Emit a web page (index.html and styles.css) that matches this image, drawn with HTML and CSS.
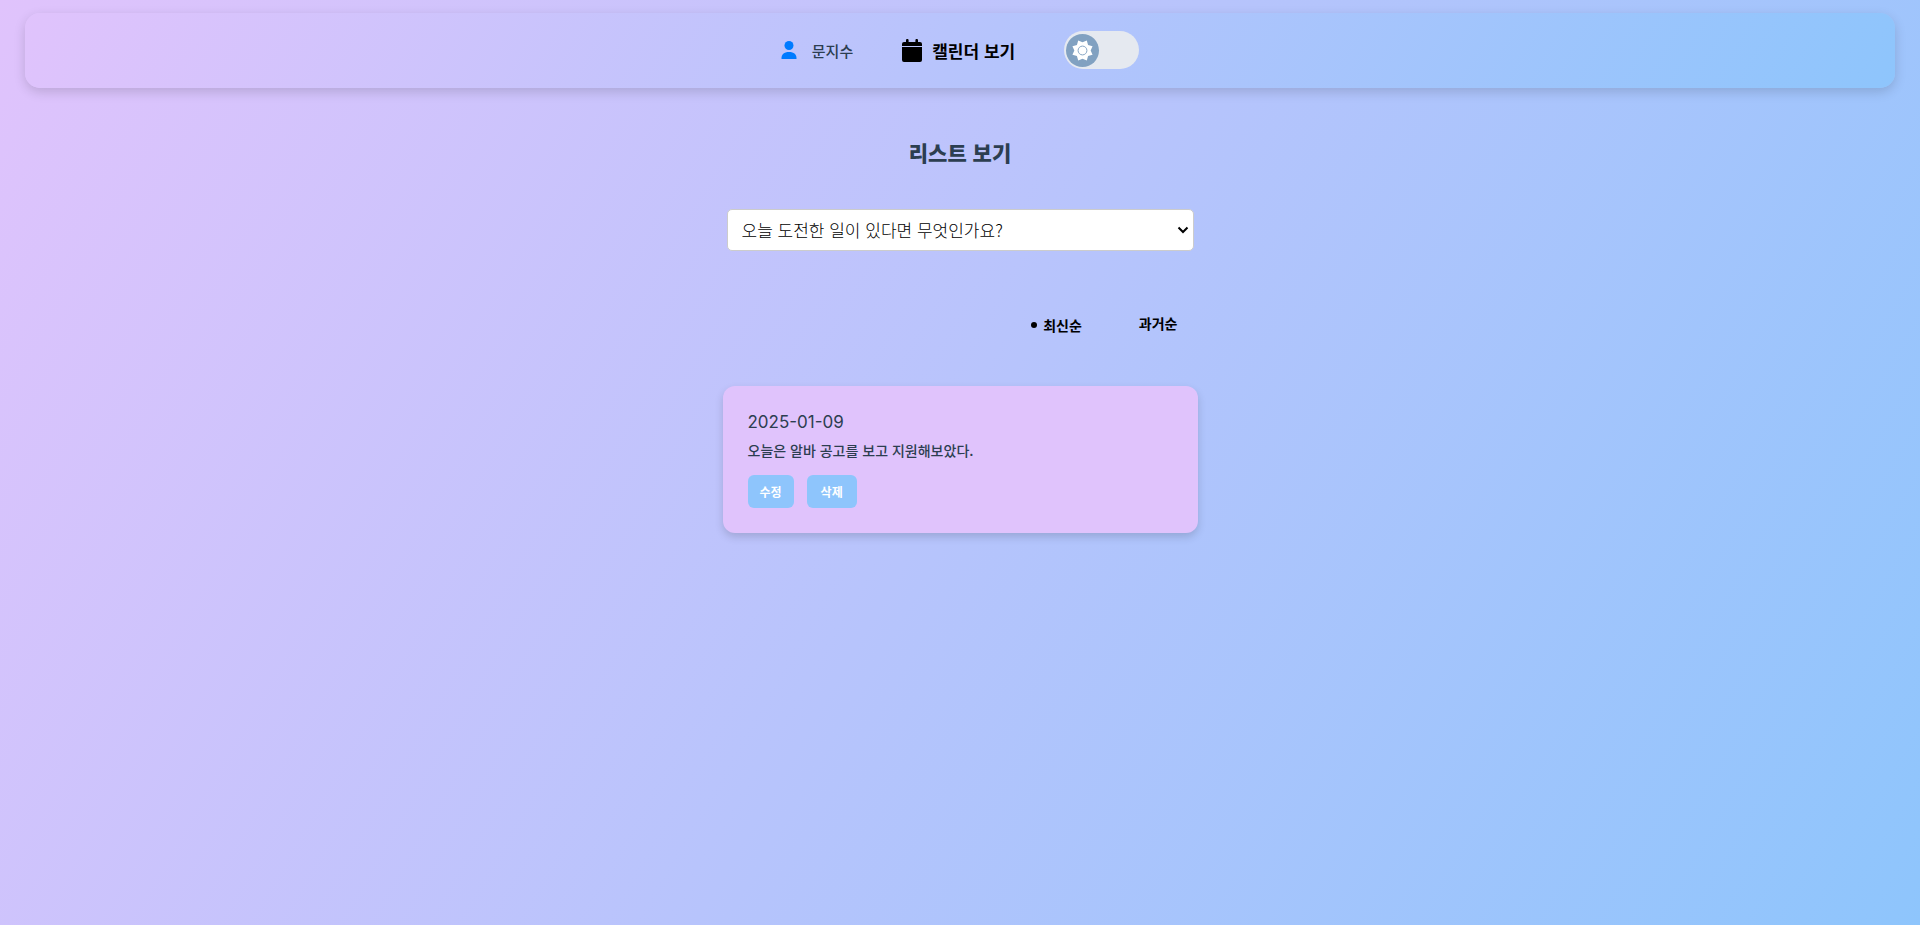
FILE: index.html
```html
<!DOCTYPE html>
<html lang="ko">
<head>
<meta charset="utf-8">
<meta name="viewport" content="width=device-width, initial-scale=1">
<title>리스트 보기</title>
<link rel="stylesheet" href="styles.css">
</head>
<body>
<header class="navbar">
  <a class="user" href="#">
    <svg class="user-icon" viewBox="0 0 16 18" aria-hidden="true"><circle cx="8" cy="4.5" r="4.5"/><path d="M0.5 18C0.2 13.500 3 11 8 11s7.800 2.500 7.500 7z"/></svg>
    <span>문지수</span>
  </a>
  <a class="calendar" href="#">
    <svg class="calendar-icon" viewBox="0 0 20 23" aria-hidden="true"><path d="M4 1.200a1.200 1.200 0 0 1 2.600 0V3h6.800V1.200a1.200 1.200 0 0 1 2.600 0V3h2a2 2 0 0 1 2 2v2H0V5a2 2 0 0 1 2-2h2zM0 8h20v13a2 2 0 0 1-2 2H2a2 2 0 0 1-2-2z"/></svg>
    <span>캘린더 보기</span>
  </a>
  <label class="switch">
    <input class="switch-input" type="checkbox" aria-label="다크 모드">
    <span class="switch-thumb">
      <svg class="sun-icon" viewBox="-12 -12 24 24" aria-hidden="true"><path d="M-4.500 -10.500 0 -8.500 4.500 -10.500 5.800 -5.800 10.500 -4.500 8.500 0 10.500 4.500 5.800 5.800 4.500 10.500 0 8.500-4.500 10.500-5.800 5.800-10.500 4.500-8.500 0-10.500-4.500-5.800-5.800z"/><circle class="sun-ring" r="4.600"/></svg>
    </span>
  </label>
</header>
<main class="content">
  <h1 class="title">리스트 보기</h1>
  <div class="question">
    <select class="question-select" aria-label="질문 선택">
      <option>오늘 도전한 일이 있다면 무엇인가요?</option>
    </select>
    <svg class="question-arrow" viewBox="0 0 12 8" aria-hidden="true"><path d="M1.500 1.500 6 6l4.500-4.500"/></svg>
  </div>
  <div class="sort">
    <button class="sort-button sort-active" type="button"><span class="dot"></span>최신순</button>
    <button class="sort-button" type="button">과거순</button>
  </div>
  <article class="card">
    <time class="card-date" datetime="2025-01-09">2025-01-09</time>
    <p class="card-text">오늘은 알바 공고를 보고 지원해보았다.</p>
    <div class="card-actions">
      <button class="action" type="button">수정</button>
      <button class="action action-delete" type="button">삭제</button>
    </div>
  </article>
</main>
</body>
</html>
```
FILE: styles.css
```css
* {
  box-sizing: border-box;
}

body {
  margin: 0;
  min-height: 100vh;
  padding: 13px 25px;
  background: linear-gradient(120deg, #e0c3fc 0%, #8ec5fc 100%);
  color: #2c3e50;
  font-family: "Noto Sans CJK KR", sans-serif;
}

button,
select {
  font-family: inherit;
}

.navbar {
  display: flex;
  justify-content: center;
  align-items: center;
  gap: 49px;
  padding: 18px 18px 19px;
  border-radius: 15px;
  background: linear-gradient(120deg, #e0c3fc 0%, #8ec5fc 100%);
  box-shadow: 0 4px 12px rgba(0, 0, 0, 0.15);
}

.user,
.calendar {
  display: flex;
  align-items: center;
  text-decoration: none;
}

.user {
  gap: 15px;
  color: #2c3e50;
  font-size: 15px;
  font-weight: 500;
}

.user-icon {
  width: 16px;
  height: 18px;
  fill: #007bff;
}

.calendar {
  gap: 10px;
  color: #000;
  font-size: 17px;
  font-weight: 700;
}

.calendar-icon {
  width: 20px;
  height: 23px;
}

.switch {
  display: flex;
  align-items: center;
  width: 75px;
  height: 38px;
  padding: 2px;
  border-radius: 19px;
  background: #e5e9f0;
  cursor: pointer;
}

.switch-input {
  position: absolute;
  opacity: 0;
}

.switch-thumb {
  display: flex;
  align-items: center;
  justify-content: center;
  width: 33px;
  height: 33px;
  border-radius: 50%;
  background: #81a1c1;
}

.switch-input:checked + .switch-thumb {
  margin-left: auto;
}

.sun-icon {
  width: 23px;
  height: 23px;
  fill: #fff;
}

.sun-ring {
  stroke: #81a1c1;
  stroke-width: 1;
}

.content {
  display: flex;
  flex-direction: column;
  align-items: center;
  width: 100%;
  max-width: 475px;
  margin: 48px auto 0;
}

.title {
  margin: 0 0 41px;
  font-size: 21px;
  font-weight: 900;
  line-height: 32px;
}

.question {
  position: relative;
  align-self: stretch;
  margin: 0 4px;
}

.question-select {
  display: block;
  width: 100%;
  height: 42px;
  padding: 0 32px 2px 14px;
  border: 1px solid #ccc;
  border-radius: 5px;
  appearance: none;
  background-color: #fff;
  color: #000;
  font-size: 17px;
  font-weight: 300;
}

.question-arrow {
  position: absolute;
  top: 17px;
  right: 5px;
  width: 12px;
  height: 8px;
  fill: none;
  stroke: #000;
  stroke-width: 2;
  pointer-events: none;
}

.sort {
  display: flex;
  align-self: flex-end;
  align-items: flex-start;
  gap: 57px;
  padding: 0 20px;
  margin: 62px 0 51px;
}

.sort-button {
  display: flex;
  align-items: center;
  gap: 6px;
  padding: 0;
  border: 0;
  background: none;
  color: #000;
  font-size: 14px;
  font-weight: 700;
  line-height: 20px;
  cursor: pointer;
}

.sort-active {
  padding-top: 2px;
}

.dot {
  width: 6px;
  height: 6px;
  border-radius: 50%;
  background: #000;
}

.card {
  width: 100%;
  padding: 25px;
  border-radius: 12px;
  background: #e0c3fc;
  box-shadow: 0 4px 8px rgba(0, 0, 0, 0.15);
}

.card-date {
  display: block;
  font-family: Inter, sans-serif;
  font-size: 17px;
  line-height: 22px;
}

.card-text {
  margin: 6px 0 13px;
  font-size: 14px;
  font-weight: 500;
  line-height: 23px;
}

.card-actions {
  display: flex;
  gap: 13px;
}

.action {
  height: 33px;
  padding: 0 12px;
  border: 0;
  border-radius: 6px;
  background: #8ec5fc;
  color: #fff;
  font-size: 12px;
  font-weight: 700;
  cursor: pointer;
}

.action-delete {
  padding: 0 14px;
}
```
